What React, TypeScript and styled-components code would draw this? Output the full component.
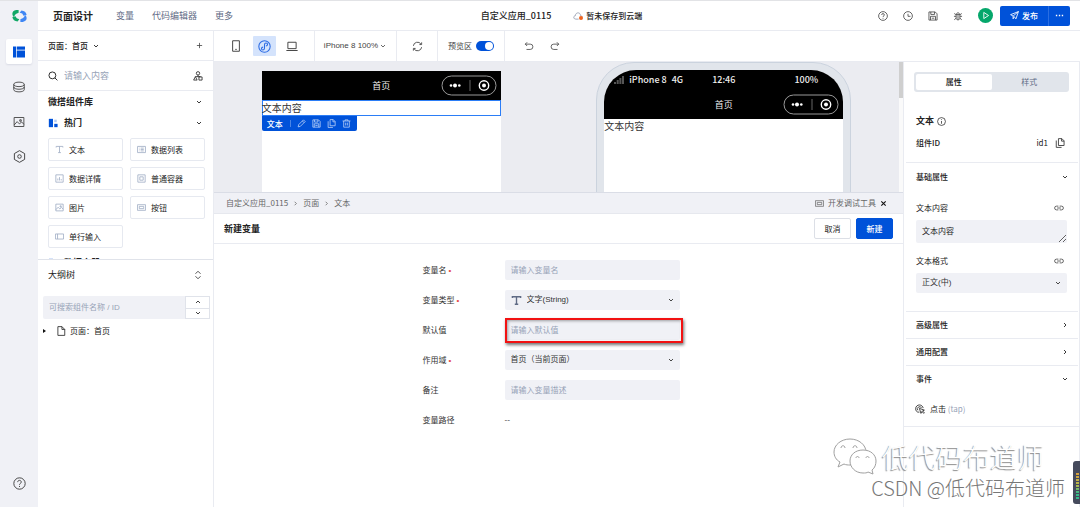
import React from "react";
import styled, { createGlobalStyle, css } from "styled-components";

const c = {
  blue: "#0052d9",
  line: "#e9ebf1",
  fill: "#f0f1f6",
  canvas: "#ebecf1",
  text: "#222",
  sub: "#5f6b85",
  hint: "#97a3b7",
};

const latin = '"Liberation Sans", "Noto Sans CJK SC", sans-serif';

const GlobalStyle = createGlobalStyle`
  *, *::before, *::after { box-sizing: border-box; }
  body {
    margin: 0;
    background: #fff;
    color: ${c.text};
    font: 8px/12px "Noto Sans CJK SC", sans-serif;
  }
  button, input, select, textarea {
    font: inherit;
    color: inherit;
    margin: 0;
    padding: 0;
    border: 0;
    border-radius: 0;
    background: none;
    outline: none;
  }
  a { color: inherit; text-decoration: none; }
  h1, h2, h3, p { margin: 0; font-size: inherit; font-weight: inherit; }
`;

/* ---------- icons ---------- */

const paths = {
  down: "M4 6l4 4 4-4",
  up: "M4 10l4-4 4 4",
  right: "M6 4l4 4-4 4",
  plus: "M8 2v12M2 8h12",
  search: "M7 1.5a5.5 5.5 0 1 0 0 11a5.5 5.5 0 1 0 0-11M11 11l4 4",
  database:
    "M8 1.5c-4 0-7 1.2-7 3s3 3 7 3 7-1.2 7-3-3-3-7-3zM1 4.5v7c0 1.800 3 3 7 3s7-1.200 7-3v-7M1 8c0 1.800 3 3 7 3s7-1.200 7-3",
  image: "M1.500 2h13v12h-13zM1.500 12l4-4.500 3 3 3-2.500 3 3M9 5h2v2h-2z",
  hexagon: "M8 .800l6.300 3.600v7.200L8 15.200l-6.300-3.600V4.400zM8 5.800a2.200 2.200 0 1 0 0 4.400a2.200 2.200 0 1 0 0-4.400",
  help: "M8 1a7 7 0 1 0 0 14a7 7 0 1 0 0-14M5.800 6.300c0-3 4.400-2.800 4.400 0 0 1.500-2.200 1.600-2.200 3.200M8 11v1.300",
  clock: "M8 1a7 7 0 1 0 0 14a7 7 0 1 0 0-14M8 4.500v4h4",
  save: "M1.500 1.500h10l3 3v10h-13zM4.500 1.500v4h6v-4M4 14.500v-6h8v6M6 11.500h4",
  bug: "M5 5.500h6v6c0 3.500-6 3.500-6 0zM5.500 5.500c0-3.500 5-3.500 5 0M1.500 8.500H5M11 8.500h3.500M2 4l3 2M14 4l-3 2M2 14l3-2.500M14 14l-3-2.500M8 6v8",
  play: "M5.500 3.500v9l7-4.500z",
  send: "M15 1L1 6.500l4.500 2.500L15 1l-4.500 13-3-4M5.500 9v5l2-4",
  phone: "M3.500 1h9v14h-9zM7 12.500h2",
  laptop: "M2.500 3h11v8.500h-11zM.500 14h15",
  mini: "M8 1a7 7 0 1 0 0 14a7 7 0 1 0 0-14M8 10.300c0 2.600-3.700 2.500-3.700.300 0-1.200 1.200-1.800 2-1.800M8 10.300V5.700c0-2.600 3.700-2.500 3.700-.300 0 1.200-1.200 1.800-2 1.800",
  refresh: "M2 7a6 6 0 0 1 11-2.500M14 9a6 6 0 0 1-11 2.500M14 2v3.200h-3.200M2 14v-3.200h3.200",
  undo: "M5 2L2 5l3 3M2 5h8a4 4 0 0 1 0 8.500H4",
  redo: "M11 2l3 3-3 3M14 5H6a4 4 0 0 0 0 8.500h6",
  tree: "M8 1a2.700 2.700 0 1 0 0 5.400a2.700 2.700 0 1 0 0-5.400M8 6.400v2.600M3.800 9l-2.800 5.500h5.600zM9.500 9.500h5v5h-5zM3.800 9h8v.500",
  text: "M2 4.500V2.500h12v2M8 2.500v11M5.500 13.500h5",
  list: "M1 2.500h14v11H1zM6.500 5.500H12M6.500 8H12M6.500 10.500H12M4 5.500h.800M4 8h.800M4 10.500h.800",
  chart: "M1.500 1.500h13v13h-13zM5 11.500V8M8 11.500v-6M11 11.500V9",
  box: "M1.500 1.500h13v13h-13zM5 5h6v6H5z",
  button: "M.800 3h14.400v10H.800zM4 6h8v4H4z",
  field: "M.800 3.500h14.400v9H.800zM4.500 3.500v9",
  pencil: "M2 14l1-4L11.500 1.500l3 3L6 13zM9.500 3.500l3 3",
  copy: "M5.500 1h5.500l3.500 3.500V12h-9zM10.500 1v4h4M2 4v11h8.500",
  trash: "M1 3.500h14M5.500 3.500V1.500h5v2M3 3.500v11h10v-11M6.500 6.500v5M9.500 6.500v5",
  page: "M3 1h6.500L14 5.500V15H3zM9.500 1v4.500H14",
  info: "M8 1a7 7 0 1 0 0 14a7 7 0 1 0 0-14M8 7v5M8 4v1.300",
  link: "M7 5H4a3 3 0 0 0 0 6h3M9 5h3a3 3 0 0 1 0 6H9M5 8h6",
  close: "M3 3l10 10M13 3L3 13",
  sort: "M4 6l4-4 4 4M4 10l4 4 4-4",
  more: "M1.500 8h2.500M6.800 8h2.500M12 8h2.500",
  cloud: "M9 13H4.500C0 13 .500 7.500 3.800 7.500 4 1.500 12 1.500 12 7.300c1.500.200 2.500 1 2.800 2",
  tap: "M7 13C3 14 1 10.500 1 7.500 1 4 4 1.500 7 1.500s6 2.500 6 5M4.500 10a3.500 3.500 0 1 1 6-3.500M7 7l2.500 8 1.500-3 3 3 1-1-3-3 3-1.200z",
};

const Svg = styled.svg<{ $size: number; $tone?: string }>`
  width: ${(p) => p.$size}px;
  height: ${(p) => p.$size}px;
  flex: none;
  display: block;
  fill: none;
  stroke: ${(p) => p.$tone ?? "currentColor"};
`;

type IconProps = { name: keyof typeof paths; size?: number; weight?: number; tone?: string };

const Icon = ({ name, size = 10, weight = 1.3, tone }: IconProps) => (
  <Svg $size={size} $tone={tone} viewBox="0 0 16 16" strokeWidth={weight} aria-hidden="true">
    <path d={paths[name]} />
  </Svg>
);

/* ---------- shell ---------- */

const Shell = styled.div`
  position: relative;
  display: flex;
  min-height: 100vh;
  border-top: 1px solid #e2e3e6;
  overflow: hidden;
`;

const Rail = styled.nav`
  width: 38px;
  flex: none;
  display: flex;
  flex-direction: column;
  align-items: center;
  gap: 10px;
  padding: 8px 0 11px;
  background: ${c.fill};
  color: #444;
`;

const Logo = styled.svg`
  width: 15px;
  height: 14px;
  margin-bottom: 6px;
`;

const RailButton = styled.button<{ $active?: boolean; $last?: boolean }>`
  width: 26px;
  height: 25px;
  display: grid;
  place-items: center;
  border-radius: 2px;
  ${(p) =>
    p.$active &&
    css`
      background: #fff;
      color: ${c.blue};
      box-shadow: 0 1px 2px rgba(0, 20, 80, 0.1);
    `}
  ${(p) => p.$last && "margin-top: auto;"}
`;

const Column = styled.div`
  flex: 1;
  min-width: 0;
  display: flex;
  flex-direction: column;
`;

const Header = styled.header`
  height: 30px;
  display: grid;
  grid-template-columns: 1fr auto 1fr;
  align-items: center;
  border-bottom: 1px solid ${c.line};
  padding: 0 10px 0 15px;
`;

const Cluster = styled.div<{ $gap: number; $end?: boolean }>`
  display: flex;
  align-items: center;
  gap: ${(p) => p.$gap}px;
  ${(p) => p.$end && "justify-content: flex-end;"}
`;

const Brand = styled.h1`
  font-size: 10px;
  font-weight: 700;
  margin-right: 5px;
`;

const HeaderLink = styled.a`
  font-size: 9px;
  color: ${c.sub};
`;

const Medium = styled.span<{ $size?: number }>`
  font-size: ${(p) => p.$size ?? 8}px;
  font-weight: 500;
`;

const CloudMark = styled.span`
  position: relative;
  color: #8f98ab;
  &::after {
    content: "";
    position: absolute;
    right: 0;
    bottom: 1px;
    width: 4px;
    height: 4px;
    border-radius: 50%;
    background: #f0641e;
  }
`;

const IconButton = styled.button<{ $tone?: string }>`
  display: grid;
  place-items: center;
  color: ${(p) => p.$tone ?? "#444"};
`;

const RunButton = styled.button`
  width: 15px;
  height: 15px;
  border-radius: 50%;
  display: grid;
  place-items: center;
  color: #fff;
  background: #05a76b;
`;

const Publish = styled.div`
  display: flex;
  height: 20px;
  border-radius: 2px;
  overflow: hidden;
  background: ${c.blue};
  color: #fff;
  font-weight: 500;
`;

const PublishPart = styled.button<{ $w: number }>`
  width: ${(p) => p.$w}px;
  display: flex;
  align-items: center;
  justify-content: center;
  gap: 3px;
  & + & {
    border-left: 1px solid #2a6ee2;
  }
`;

const Body = styled.div`
  flex: 1;
  display: flex;
`;

/* ---------- left panel ---------- */

const Side = styled.aside`
  width: 176px;
  flex: none;
  display: flex;
  flex-direction: column;
  border-right: 1px solid ${c.line};
`;

const SideBar = styled.div<{ $h: number; $line?: boolean }>`
  height: ${(p) => p.$h}px;
  display: flex;
  align-items: center;
  gap: 6px;
  padding: 0 10px;
  flex: none;
  ${(p) => p.$line && `border-bottom: 1px solid ${c.line};`}
  > svg:last-child,
  > button:last-child {
    margin-left: auto;
  }
`;

const PageSelect = styled.button`
  display: flex;
  align-items: center;
  gap: 4px;
  font-weight: 500;
`;

const SearchInput = styled.input`
  flex: 1;
  min-width: 0;
  font-size: 9px;
  &::placeholder {
    color: ${c.hint};
    opacity: 1;
  }
`;

const Heading = styled.h2<{ $light?: boolean }>`
  font-size: 9px;
  font-weight: ${(p) => (p.$light ? 400 : 700)};
`;

const Library = styled.section`
  height: 169px;
  overflow: hidden;
  border-bottom: 1px solid #e0e3ea;
  flex: none;
`;

const Cards = styled.div`
  display: grid;
  grid-template-columns: 75px 75px;
  gap: 6px 7px;
  padding: 5px 10px 8px;
`;

const Card = styled.button`
  height: 23px;
  display: flex;
  align-items: center;
  gap: 5px;
  padding-left: 6px;
  border: 1px solid #e6e9f0;
  border-radius: 2px;
  svg {
    color: #a3afc6;
  }
`;

const TreeSearch = styled.div`
  display: flex;
  height: 23px;
  margin: 6px 3px 0 5px;
  background: ${c.fill};
  border-radius: 2px;
`;

const TreeInput = styled.input`
  flex: 1;
  min-width: 0;
  padding-left: 6px;
  font-family: ${latin};
  &::placeholder {
    color: ${c.hint};
    opacity: 1;
  }
`;

const Steps = styled.div`
  width: 25px;
  display: grid;
  grid-template-rows: 1fr 1fr;
  background: #fff;
  border: 1px solid #e0e3ea;
  button + button {
    border-top: 1px solid #e0e3ea;
  }
`;

const TreeRow = styled.div`
  display: flex;
  align-items: center;
  gap: 4px;
  padding: 6px 5px;
  &::before {
    content: "";
    border: 2px solid transparent;
    border-left: 3px solid #111;
    margin-right: 4px;
  }
`;

/* ---------- toolbar ---------- */

const Work = styled.div`
  flex: 1;
  min-width: 0;
  display: flex;
  flex-direction: column;
`;

const Toolbar = styled.div`
  height: 31px;
  flex: none;
  display: flex;
  border-bottom: 1px solid ${c.line};
`;

const ToolGroup = styled.div<{ $w: number; $gap?: number }>`
  width: ${(p) => p.$w}px;
  display: flex;
  align-items: center;
  justify-content: center;
  gap: ${(p) => p.$gap ?? 4}px;
  border-right: 1px solid ${c.line};
  color: #444;
  &:last-child {
    border-right: 0;
  }
`;

const Device = styled.button<{ $on?: boolean }>`
  width: 23px;
  height: 20px;
  display: grid;
  place-items: center;
  border-radius: 1px;
  ${(p) => p.$on && `background: #d4e3fc; color: #2b6be4;`}
`;

const ZoomButton = styled.button`
  display: flex;
  align-items: center;
  gap: 1px;
  font-family: ${latin};
`;

const SwitchLabel = styled.label`
  display: flex;
  align-items: center;
  gap: 4px;
`;

const Switch = styled.input`
  appearance: none;
  width: 18px;
  height: 10px;
  border-radius: 5px;
  background: ${c.blue};
  padding: 1px;
  display: flex;
  justify-content: flex-end;
  &::after {
    content: "";
    width: 8px;
    height: 8px;
    border-radius: 50%;
    background: #fff;
  }
`;

/* ---------- canvas ---------- */

const Split = styled.div`
  flex: 1;
  display: flex;
`;

const Center = styled.main`
  flex: 1;
  min-width: 0;
`;

const Canvas = styled.div`
  height: 130px;
  display: flex;
  overflow: hidden;
  background: ${c.canvas};
`;

const Stage = styled.div`
  flex: 1;
  display: flex;
  justify-content: space-around;
`;

const ScrollTrack = styled.div`
  width: 4px;
  background: #fafafa;
  &::before {
    content: "";
    display: block;
    height: 36px;
    background: #cfcfcf;
  }
`;

const Sheet = styled.section`
  width: 239px;
  margin-top: 9px;
  height: 240px;
  background: #fff;
`;

const Frame = styled.section`
  width: 255px;
  height: 300px;
  padding: 7px;
  border: 1px solid #cbd3de;
  border-radius: 38px;
  background: #e1e5eb;
`;

const Screen = styled.div`
  height: 100%;
  overflow: hidden;
  border-radius: 32px 32px 0 0;
  background: #fff;
`;

const StatusBar = styled.div`
  height: 20px;
  display: grid;
  grid-template-columns: 1fr auto 1fr;
  align-items: center;
  padding: 0 10px;
  background: #000;
  color: #eee;
  font-size: 9px;
  font-weight: 500;
  > :last-child {
    text-align: right;
    padding-right: 15px;
  }
`;

const Signal = styled.svg`
  width: 10px;
  height: 8px;
  fill: #555;
`;

const NavBar = styled.div`
  height: 29px;
  display: grid;
  grid-template-columns: 1fr auto 1fr;
  align-items: center;
  padding: 0 4px;
  background: #000;
  color: #eee;
  font-size: 9px;
  > :first-child {
    grid-column: 2;
  }
  > :last-child {
    justify-self: end;
  }
`;

const Capsule = styled.svg`
  width: 56px;
  height: 21px;
  display: block;
`;

const SampleText = styled.p<{ $selected?: boolean }>`
  font-size: 10px;
  line-height: 14px;
  color: #333;
  height: 16px;
  ${(p) => p.$selected && "line-height: 13px; border: solid #2b7df6; border-width: 1px 1px 1px 0; box-shadow: inset 1px 0 #2b7df6;"}
`;

const TextActions = styled.div`
  width: 95px;
  height: 15px;
  display: flex;
  align-items: center;
  gap: 6px;
  padding-left: 5px;
  border-radius: 0 0 2px 2px;
  background: ${c.blue};
  color: #c9dbfa;
  > :first-child {
    padding-right: 7px;
    border-right: 1px solid #4a85e6;
    line-height: 7px;
    color: #fff;
  }
`;

const Crumbs = styled.div`
  height: 22px;
  display: flex;
  align-items: center;
  gap: 4px;
  padding: 0 16px 0 12px;
  border-top: 1px solid #dadde6;
  border-bottom: 1px solid #e6e8ee;
  background: ${c.fill};
  color: #666;
`;

const DevTools = styled.div`
  margin-left: auto;
  display: flex;
  align-items: center;
  gap: 4px;
`;

const FormHead = styled.div`
  height: 30px;
  display: flex;
  align-items: center;
  gap: 5px;
  padding: 0 10px;
  border-bottom: 1px solid ${c.line};
  > h2 {
    margin-right: auto;
  }
`;

const Action = styled.button<{ $primary?: boolean }>`
  width: 37px;
  height: 21px;
  border-radius: 2px;
  border: 1px solid ${(p) => (p.$primary ? c.blue : "#dcdfe6")};
  background: ${(p) => (p.$primary ? c.blue : "#fff")};
  color: ${(p) => (p.$primary ? "#fff" : c.text)};
  font-weight: ${(p) => (p.$primary ? 500 : 400)};
`;

const Form = styled.form`
  width: 272px;
  margin: 16px auto 0;
  display: grid;
  grid-template-columns: 82px 175px;
  grid-auto-rows: 20px;
  row-gap: 10px;
  align-items: center;
  color: #333;
`;

const Label = styled.label<{ $required?: boolean }>`
  ${(p) =>
    p.$required &&
    css`
      &::after {
        content: "•";
        margin-left: 2px;
        font: 8px/8px "Liberation Sans", sans-serif;
        color: #e54545;
      }
    `}
`;

const Field = styled.div<{ $marked?: boolean }>`
  position: relative;
  display: flex;
  align-items: center;
  gap: 5px;
  height: 20px;
  padding: 0 5px 0 6px;
  border-radius: 2px;
  background: ${c.fill};
  font-family: ${latin};
  color: #333;
  input,
  select {
    flex: 1;
    min-width: 0;
    height: 100%;
    appearance: none;
  }
  input::placeholder {
    color: ${c.hint};
    opacity: 1;
  }
  ${(p) =>
    p.$marked &&
    css`
      &::after {
        content: "";
        position: absolute;
        inset: -2px -3px -3px 0;
        border: 2px solid #f21212;
        box-shadow: 1px 2px 3px rgba(0, 0, 0, 0.55), inset 1px 1px 3px rgba(0, 0, 0, 0.35);
        pointer-events: none;
      }
    `}
`;

/* ---------- right panel ---------- */

const Props = styled.aside`
  width: 177px;
  flex: none;
  border-left: 1px solid ${c.line};
  border-right: 1px solid ${c.line};
`;

const Tabs = styled.div`
  display: grid;
  grid-template-columns: 1fr 1fr;
  margin: 10px 10px 20px;
  padding: 2px;
  height: 20px;
  border-radius: 3px;
  background: #e1e5eb;
`;

const Tab = styled.button<{ $on?: boolean }>`
  border-radius: 2px;
  background: ${(p) => (p.$on ? "#fff" : "none")};
  font-weight: ${(p) => (p.$on ? 500 : 400)};
  color: ${(p) => (p.$on ? "#111" : c.sub)};
`;

const PropRow = styled.div<{ $h: number; $rule?: boolean; $top?: number }>`
  height: ${(p) => p.$h}px;
  display: flex;
  align-items: center;
  gap: 3px;
  margin: ${(p) => p.$top ?? 0}px 1px 0 2px;
  padding: 0 9px 0 10px;
  ${(p) => p.$rule && `border-top: 1px solid ${c.line};`}
  > svg:last-child,
  > button:last-child {
    margin-left: auto;
  }
`;

const FieldHead = styled.div`
  height: 24px;
  display: flex;
  align-items: center;
  justify-content: space-between;
  margin: 6px 15px 0 12px;
`;

const IdValue = styled.span`
  margin: 0 4px 0 auto;
  display: flex;
  align-items: center;
  gap: 7px;
`;

const Area = styled.textarea`
  display: block;
  width: calc(100% - 24px);
  height: 23px;
  margin: 0 12px;
  padding: 5px 6px;
  border-radius: 2px;
  background: ${c.fill};
  resize: vertical;
`;

const PropField = styled.div`
  margin: 0 12px 18px;
`;

const EventRow = styled.div`
  height: 35px;
  display: flex;
  align-items: center;
  gap: 5px;
  padding: 0 11px;
  border-bottom: 1px solid ${c.line};
  i {
    font-style: normal;
    color: ${c.hint};
  }
`;

/* ---------- overlays ---------- */

const Watermark = styled.div`
  position: absolute;
  right: 15px;
  bottom: 6px;
  display: flex;
  flex-direction: column;
  align-items: flex-end;
  pointer-events: none;
  font-weight: 300;
`;

const MarkTitle = styled.div`
  display: flex;
  align-items: center;
  gap: 5px;
  margin-right: 21px;
  font-size: 27px;
  line-height: 29px;
  color: #fff;
  text-shadow: -1px 1px 1px #888;
`;

const MarkNote = styled.div`
  font-size: 20px;
  line-height: 26px;
  color: #777;
  text-shadow: 1px 0 0 #fff;
`;

const Bubbles = styled.svg`
  width: 44px;
  height: 37px;
  fill: #fff;
  stroke: #a0a0a0;
`;

const Meter = styled.div`
  position: absolute;
  right: 0;
  bottom: 3px;
  width: 7px;
  height: 43px;
  padding: 12px 1px 4px 3px;
  border-radius: 3px 0 0 3px;
  background: #454a5c;
  &::before {
    content: "";
    display: block;
    height: 27px;
    background: repeating-linear-gradient(transparent 0 2px, #454a5c 2px 3px),
      linear-gradient(#d9a03c, #b5b84a 45%, #35b98a 75%);
  }
`;

/* ---------- parts ---------- */

const CapsuleButtons = () => (
  <Capsule viewBox="0 0 56 21" fill="none" aria-hidden="true">
    <rect x="1" y="1" width="54" height="19" rx="9.5" stroke="#999" />
    <path d="M29 5v11" stroke="#666" />
    <g fill="#fff">
      <circle cx="10" cy="10.500" r="1.300" />
      <circle cx="14" cy="10.500" r="2" />
      <circle cx="18.300" cy="10.500" r="1.300" />
      <circle cx="43" cy="10.500" r="2" />
    </g>
    <circle cx="43" cy="10.500" r="4.700" stroke="#fff" strokeWidth="1.400" />
  </Capsule>
);

const components: [keyof typeof paths, string][] = [
  ["text", "文本"],
  ["list", "数据列表"],
  ["chart", "数据详情"],
  ["box", "普通容器"],
  ["image", "图片"],
  ["button", "按钮"],
  ["field", "单行输入"],
];

const LayoutMark = ({ size, gap }: { size: number; gap?: boolean }) => (
  <Svg $size={size} viewBox="0 0 12 12" aria-hidden="true">
    <g fill={c.blue} stroke="none">
      <path d={gap ? "M1 1h5v10H1z" : "M0 .5h3v11H0z"} />
      <path d={gap ? "M7.500 7h4v4h-4z" : "M3.700 4.500H12v7H3.700z"} />
      <path d={gap ? "M7.500 2h3v3h-3z" : "M3.700.5H12v3.200H3.700z"} opacity={gap ? 0.3 : 1} />
    </g>
  </Svg>
);

const logoHalf = "M19 1H12Q1 3 1 12q0 5 4 8l6-8 8-3zM1 21q2 12 15 13l5-7q-9-1-11-8z";

export default function App() {
  return (
    <>
      <GlobalStyle />
      <Shell>
        <Rail aria-label="主导航">
          <Logo viewBox="0 0 43 36" aria-hidden="true">
            <path d={logoHalf} fill="#12a866" />
            <path d={logoHalf} fill="#3f86f4" transform="rotate(180 21.500 18)" />
          </Logo>
          <RailButton $active aria-label="页面设计">
            <LayoutMark size={12} />
          </RailButton>
          <RailButton aria-label="数据">
            <Icon name="database" size={12} weight={1.2} />
          </RailButton>
          <RailButton aria-label="素材">
            <Icon name="image" size={12} weight={1.2} />
          </RailButton>
          <RailButton aria-label="设置">
            <Icon name="hexagon" size={13} weight={1.2} />
          </RailButton>
          <RailButton $last aria-label="帮助">
            <Icon name="help" size={13} weight={1.2} />
          </RailButton>
        </Rail>

        <Column>
          <Header>
            <Cluster $gap={18}>
              <Brand>页面设计</Brand>
              <HeaderLink href="#vars">变量</HeaderLink>
              <HeaderLink href="#code">代码编辑器</HeaderLink>
              <HeaderLink href="#more">更多</HeaderLink>
            </Cluster>
            <Cluster $gap={22}>
              <Medium $size={9}>自定义应用_0115</Medium>
              <Cluster $gap={3}>
                <CloudMark>
                  <Icon name="cloud" size={10} />
                </CloudMark>
                <Medium>暂未保存到云端</Medium>
              </Cluster>
            </Cluster>
            <Cluster $gap={15} $end>
              <IconButton aria-label="帮助">
                <Icon name="help" />
              </IconButton>
              <IconButton aria-label="历史">
                <Icon name="clock" />
              </IconButton>
              <IconButton aria-label="保存">
                <Icon name="save" />
              </IconButton>
              <IconButton aria-label="调试">
                <Icon name="bug" />
              </IconButton>
              <Cluster $gap={7}>
                <RunButton aria-label="预览">
                  <Icon name="play" size={11} />
                </RunButton>
                <Publish>
                  <PublishPart $w={48}>
                    <Icon name="send" size={9} weight={1.5} />
                    发布
                  </PublishPart>
                  <PublishPart $w={22} aria-label="更多发布选项">
                    <Icon name="more" size={9} weight={2.5} />
                  </PublishPart>
                </Publish>
              </Cluster>
            </Cluster>
          </Header>

          <Body>
            <Side>
              <SideBar $h={30} $line>
                <PageSelect>
                  页面：首页
                  <Icon name="down" size={8} weight={1.8} />
                </PageSelect>
                <IconButton aria-label="新建页面">
                  <Icon name="plus" size={7} weight={1.8} />
                </IconButton>
              </SideBar>
              <SideBar $h={30} $line>
                <Icon name="search" size={10} weight={1.5} />
                <SearchInput aria-label="搜索组件" placeholder="请输入内容" />
                <Icon name="tree" size={10} />
              </SideBar>
              <Library>
                <SideBar $h={21}>
                  <Heading>微搭组件库</Heading>
                  <Icon name="down" size={8} weight={1.8} />
                </SideBar>
                <SideBar $h={21}>
                  <LayoutMark size={10} gap />
                  <Heading>热门</Heading>
                  <Icon name="down" size={8} weight={1.8} />
                </SideBar>
                <Cards>
                  {components.map(([icon, label]) => (
                    <Card key={label}>
                      <Icon name={icon} size={9} weight={1.5} />
                      {label}
                    </Card>
                  ))}
                </Cards>
                <SideBar $h={14}>
                  <LayoutMark size={10} gap />
                  <Heading>数据容器</Heading>
                </SideBar>
              </Library>
              <SideBar $h={30}>
                <Heading $light>大纲树</Heading>
                <IconButton aria-label="展开大纲树">
                  <Icon name="sort" size={10} weight={1.5} />
                </IconButton>
              </SideBar>
              <TreeSearch>
                <TreeInput aria-label="搜索大纲树" placeholder="可搜索组件名称 / ID" />
                <Steps>
                  <IconButton aria-label="上一个">
                    <Icon name="up" size={8} weight={2} />
                  </IconButton>
                  <IconButton aria-label="下一个">
                    <Icon name="down" size={8} weight={2} />
                  </IconButton>
                </Steps>
              </TreeSearch>
              <TreeRow>
                <Icon name="page" size={10} />
                <span>页面：首页</span>
              </TreeRow>
            </Side>

            <Work>
              <Toolbar>
                <ToolGroup $w={101} $gap={5}>
                  <Device aria-label="手机">
                    <Icon name="phone" size={12} />
                  </Device>
                  <Device $on aria-label="小程序">
                    <Icon name="mini" size={13} />
                  </Device>
                  <Device aria-label="电脑">
                    <Icon name="laptop" size={12} />
                  </Device>
                </ToolGroup>
                <ToolGroup $w={82}>
                  <ZoomButton>
                    iPhone 8 100%
                    <Icon name="down" size={8} weight={1.6} />
                  </ZoomButton>
                </ToolGroup>
                <ToolGroup $w={41}>
                  <IconButton aria-label="刷新">
                    <Icon name="refresh" size={11} />
                  </IconButton>
                </ToolGroup>
                <ToolGroup $w={67}>
                  <SwitchLabel>
                    预览区
                    <Switch type="checkbox" role="switch" defaultChecked />
                  </SwitchLabel>
                </ToolGroup>
                <ToolGroup $w={74} $gap={16}>
                  <IconButton aria-label="撤销">
                    <Icon name="undo" />
                  </IconButton>
                  <IconButton aria-label="重做">
                    <Icon name="redo" />
                  </IconButton>
                </ToolGroup>
              </Toolbar>

              <Split>
                <Center>
                  <Canvas>
                    <Stage>
                      <Sheet>
                        <NavBar>
                          <span>首页</span>
                          <CapsuleButtons />
                        </NavBar>
                        <SampleText $selected>文本内容</SampleText>
                        <TextActions>
                          <Medium>文本</Medium>
                          <Icon name="pencil" size={9} />
                          <Icon name="save" size={9} />
                          <Icon name="copy" size={9} />
                          <Icon name="trash" size={9} />
                        </TextActions>
                      </Sheet>
                      <Frame>
                        <Screen>
                          <StatusBar>
                            <Cluster $gap={5}>
                              <Signal viewBox="0 0 10 8" aria-hidden="true">
                                <path d="M0 6h2v2H0zM2.700 4h2v4h-2zM5.400 2h2v6h-2zM8 0h2v8H8z" />
                              </Signal>
                              <span>iPhone 8</span>
                              <span>4G</span>
                            </Cluster>
                            <span>12:46</span>
                            <span>100%</span>
                          </StatusBar>
                          <NavBar>
                            <span>首页</span>
                            <CapsuleButtons />
                          </NavBar>
                          <SampleText>文本内容</SampleText>
                        </Screen>
                      </Frame>
                    </Stage>
                    <ScrollTrack />
                  </Canvas>

                  <Crumbs>
                    <span>自定义应用_0115</span>
                    <Icon name="right" size={7} weight={1.8} />
                    <span>页面</span>
                    <Icon name="right" size={7} weight={1.8} />
                    <span>文本</span>
                    <DevTools>
                      <Icon name="button" size={9} />
                      <span>开发调试工具</span>
                      <IconButton $tone="#111" aria-label="关闭">
                        <Icon name="close" size={7} weight={2.5} />
                      </IconButton>
                    </DevTools>
                  </Crumbs>
                  <FormHead>
                    <Heading>新建变量</Heading>
                    <Action type="button">取消</Action>
                    <Action type="submit" form="variable" $primary>
                      新建
                    </Action>
                  </FormHead>

                  <Form id="variable">
                    <Label htmlFor="name" $required>
                      变量名
                    </Label>
                    <Field>
                      <input id="name" placeholder="请输入变量名" />
                    </Field>
                    <Label htmlFor="type" $required>
                      变量类型
                    </Label>
                    <Field>
                      <Icon name="text" size={11} weight={2} tone={c.sub} />
                      <select id="type">
                        <option>文字(String)</option>
                      </select>
                      <Icon name="down" size={8} weight={1.8} />
                    </Field>
                    <Label htmlFor="default">默认值</Label>
                    <Field $marked>
                      <input id="default" placeholder="请输入默认值" />
                    </Field>
                    <Label htmlFor="scope" $required>
                      作用域
                    </Label>
                    <Field>
                      <select id="scope">
                        <option>首页（当前页面）</option>
                      </select>
                      <Icon name="down" size={8} weight={1.8} />
                    </Field>
                    <Label htmlFor="remark">备注</Label>
                    <Field>
                      <input id="remark" placeholder="请输入变量描述" />
                    </Field>
                    <Label as="span">变量路径</Label>
                    <span>--</span>
                  </Form>
                </Center>

                <Props>
                  <Tabs role="tablist">
                    <Tab role="tab" aria-selected="true" $on>
                      属性
                    </Tab>
                    <Tab role="tab" aria-selected="false">
                      样式
                    </Tab>
                  </Tabs>
                  <PropRow $h={18}>
                    <Heading>文本</Heading>
                    <span>
                      <Icon name="info" size={9} />
                    </span>
                  </PropRow>
                  <PropRow $h={26}>
                    <Medium>组件ID</Medium>
                    <IdValue>
                      id1
                      <IconButton aria-label="复制组件ID">
                        <Icon name="copy" size={10} weight={1.5} />
                      </IconButton>
                    </IdValue>
                  </PropRow>
                  <PropRow $h={28} $top={6} $rule>
                    <Medium>基础属性</Medium>
                    <Icon name="down" size={8} weight={1.8} />
                  </PropRow>
                  <FieldHead>
                    <label htmlFor="content">文本内容</label>
                    <IconButton aria-label="绑定文本内容">
                      <Icon name="link" />
                    </IconButton>
                  </FieldHead>
                  <Area id="content" defaultValue="文本内容" />
                  <FieldHead>
                    <label htmlFor="format">文本格式</label>
                    <IconButton aria-label="绑定文本格式">
                      <Icon name="link" />
                    </IconButton>
                  </FieldHead>
                  <PropField>
                    <Field>
                      <select id="format">
                        <option>正文(中)</option>
                      </select>
                      <Icon name="down" size={8} weight={1.8} />
                    </Field>
                  </PropField>
                  <PropRow $h={27} $rule>
                    <Medium>高级属性</Medium>
                    <Icon name="right" size={8} weight={1.8} />
                  </PropRow>
                  <PropRow $h={27} $rule>
                    <Medium>通用配置</Medium>
                    <Icon name="right" size={8} weight={1.8} />
                  </PropRow>
                  <PropRow $h={27} $rule>
                    <Medium>事件</Medium>
                    <Icon name="down" size={8} weight={1.8} />
                  </PropRow>
                  <EventRow>
                    <Icon name="tap" />
                    <span>
                      点击 <i>(tap)</i>
                    </span>
                  </EventRow>
                </Props>
              </Split>
            </Work>
          </Body>
        </Column>

        <Watermark>
          <MarkTitle>
            <Bubbles viewBox="0 0 44 37" aria-hidden="true">
              <path d="M17 1C8 1 1 7 1 14c0 4 2 8 6 10l-2 5 6-3c2 1 4 1 6 1 9 0 16-6 16-13S26 1 17 1z" />
              <path d="M30 12c-8 0-13 5-13 11s5 12 13 12c2 0 4 0 5-1l5 2-1-4c3-2 4-6 4-9 0-6-5-11-13-11z" />
              <path d="M8 10c0-3 4-3 4 0M20 10c0-3 4-3 4 0M23 20c0-2 3-2 3 0M33 20c0-2 3-2 3 0" />
            </Bubbles>
            低代码布道师
          </MarkTitle>
          <MarkNote>CSDN @低代码布道师</MarkNote>
        </Watermark>
        <Meter />
      </Shell>
    </>
  );
}
